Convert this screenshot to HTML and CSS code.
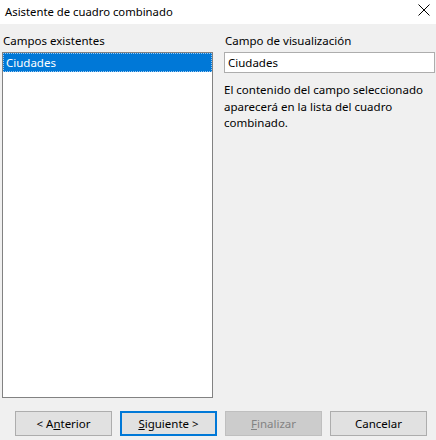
FILE: index.html
```html
<!DOCTYPE html>
<html lang="es">
<head>
<meta charset="utf-8">
<title>Asistente de cuadro combinado</title>
<link rel="stylesheet" href="styles.css">
</head>
<body>
<div class="window">
  <div class="titlebar">
    <span class="title">Asistente de cuadro combinado</span>
    <svg class="close" width="12" height="12" viewBox="0 0 12 12"><path d="M0.5 0.5 L11.5 11.5 M11.5 0.5 L0.5 11.5" stroke="#000" stroke-width="1" fill="none"/></svg>
  </div>
  <div class="main">
    <div class="col">
      <div class="label">Campos existentes</div>
      <div class="listbox">
        <div class="item selected">Ciudades</div>
      </div>
    </div>
    <div class="col">
      <div class="label">Campo de visualización</div>
      <div class="textfield">Ciudades</div>
      <p class="desc">El contenido del campo seleccionado aparecerá en la lista del cuadro combinado.</p>
    </div>
  </div>
  <div class="buttons">
    <button class="btn">&lt; A<u>n</u>terior</button>
    <button class="btn default"><u>S</u>iguiente &gt;</button>
    <button class="btn disabled"><u>F</u>inalizar</button>
    <button class="btn">Cancelar</button>
  </div>
</div>
</body>
</html>
```
FILE: styles.css
```css
* { box-sizing: border-box; }
html, body { margin: 0; padding: 0; }
body {
  background: #f0f0f0;
  font-family: "Noto Sans", "Open Sans", sans-serif;
  font-size: 11.5px;
  color: #000;
  width: 436px;
  height: 440px;
  overflow: hidden;
}
.titlebar {
  height: 24px;
  background: #fff;
  display: flex;
  align-items: center;
  justify-content: space-between;
  padding: 0 8px 2px 5px;
}
.title { font-size: 11.3px; }
.close { margin-top: -2px; margin-right: -2px; }
.main {
  display: grid;
  grid-template-columns: 211px 211px;
  column-gap: 11px;
  padding: 9px 0 0 2px;
}
.label {
  line-height: 15px;
  height: 15px;
  margin-bottom: 4px;
  padding-left: 1px;
}
.listbox {
  height: 346px;
  background: #fff;
  border: 1px solid #828282;
}
.item {
  height: 19px;
  line-height: 17px;
  padding-left: 2px;
}
.item.selected {
  background: #0078d7;
  color: #fff;
  border: 1px dotted #9ec9ef;
}
.textfield {
  height: 21px;
  background: #fff;
  border: 1px solid #adadad;
  line-height: 19px;
  padding-left: 3px;
}
.desc {
  margin: 9px 0 0 0;
  line-height: 16.5px;
  padding-right: 4px;
}
.buttons {
  display: grid;
  grid-template-columns: repeat(4, 97px);
  column-gap: 8px;
  padding: 13px 0 0 15px;
}
.btn {
  height: 25px;
  background: #e1e1e1;
  border: 1px solid #adadad;
  font-family: inherit;
  font-size: 11.5px;
  color: #000;
  padding: 0;
}
.btn.default {
  border: 2px solid #0078d7;
}
.btn.disabled {
  background: #cccccc;
  border-color: #bfbfbf;
  color: #838383;
}
```
